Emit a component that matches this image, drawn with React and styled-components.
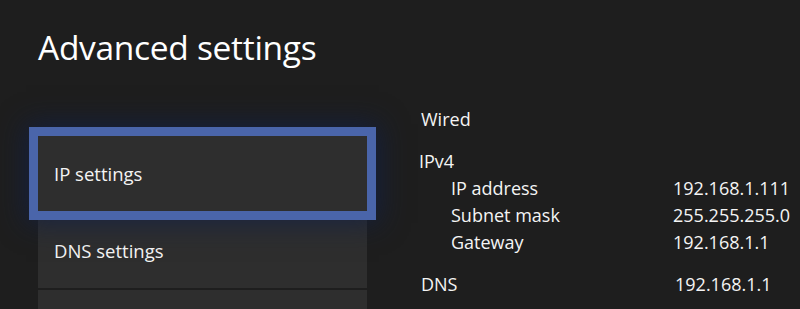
import styled, { createGlobalStyle } from 'styled-components'

const GlobalStyle = createGlobalStyle`
  html, body {
    margin: 0;
    padding: 0;
    background: #1e1e1e;
  }
  body {
    font-family: "Open Sans", "Noto Sans", sans-serif;
    color: #f2f2f2;
  }
`

const networkInfo = {
    connection: 'Wired',
    ipv4: [
        { label: 'IP address', value: '192.168.1.111' },
        { label: 'Subnet mask', value: '255.255.255.0' },
        { label: 'Gateway', value: '192.168.1.1' },
    ],
    dns: '192.168.1.1',
}

const menuItems = ['IP settings', 'DNS settings', '']

const App = () => {
    return (
        <>
            <GlobalStyle />
            <Screen>
                <Title>Advanced settings</Title>
                <Body>
                    <Menu>
                        {menuItems.map((item, i) => (
                            <MenuItem key={i} $focused={i === 0}>{item}</MenuItem>
                        ))}
                    </Menu>
                    <Details>
                        <Heading>{networkInfo.connection}</Heading>
                        <Section>
                            <Heading>IPv4</Heading>
                            {networkInfo.ipv4.map((row) => (
                                <InfoRow key={row.label} $indent>
                                    <span>{row.label}</span>
                                    <Value>{row.value}</Value>
                                </InfoRow>
                            ))}
                        </Section>
                        <InfoRow>
                            <span>DNS</span>
                            <Value>{networkInfo.dns}</Value>
                        </InfoRow>
                    </Details>
                </Body>
            </Screen>
        </>
    )
}

const Screen = styled.div`
    width: 800px;
    height: 309px;
    overflow: hidden;
    background: #1e1e1e;
    padding: 23px 0 0 38px;
    box-sizing: border-box;
`

const Title = styled.h1`
    margin: 0;
    font-size: 33.5px;
    font-weight: 400;
    line-height: 48px;
    letter-spacing: -0.3px;
    color: #ffffff;
`

const Body = styled.div`
    display: flex;
    margin-top: 65px;
`

const Menu = styled.div`
    width: 329px;
    display: flex;
    flex-direction: column;
    gap: 2px;
`

const MenuItem = styled.div`
    position: relative;
    height: 75px;
    background: #2e2e2e;
    display: flex;
    align-items: center;
    padding-left: 16px;
    font-size: 18.5px;
    color: #f4f4f4;
    z-index: ${({ $focused }) => ($focused ? 1 : 0)};
    box-shadow: ${({ $focused }) =>
        $focused
            ? '0 0 0 9px #4a65aa, 0 0 26px 12px rgba(18, 32, 72, 0.75)'
            : 'none'};
`

const Details = styled.div`
    margin-left: 54px;
    margin-top: -30px;
    width: 370px;
    display: flex;
    flex-direction: column;
    font-size: 18px;
    color: #f4f4f4;
`

const Heading = styled.div`
    line-height: 27px;
`

const Section = styled.div`
    margin: 15px 0 15px -2px;
`

const InfoRow = styled.div`
    display: flex;
    line-height: 27px;
    padding-left: ${({ $indent }) => ($indent ? '32px' : '0')};

    span:first-child {
        width: ${({ $indent }) => ($indent ? '222px' : '254px')};
    }
`

const Value = styled.span`
    white-space: nowrap;
`

export default App
